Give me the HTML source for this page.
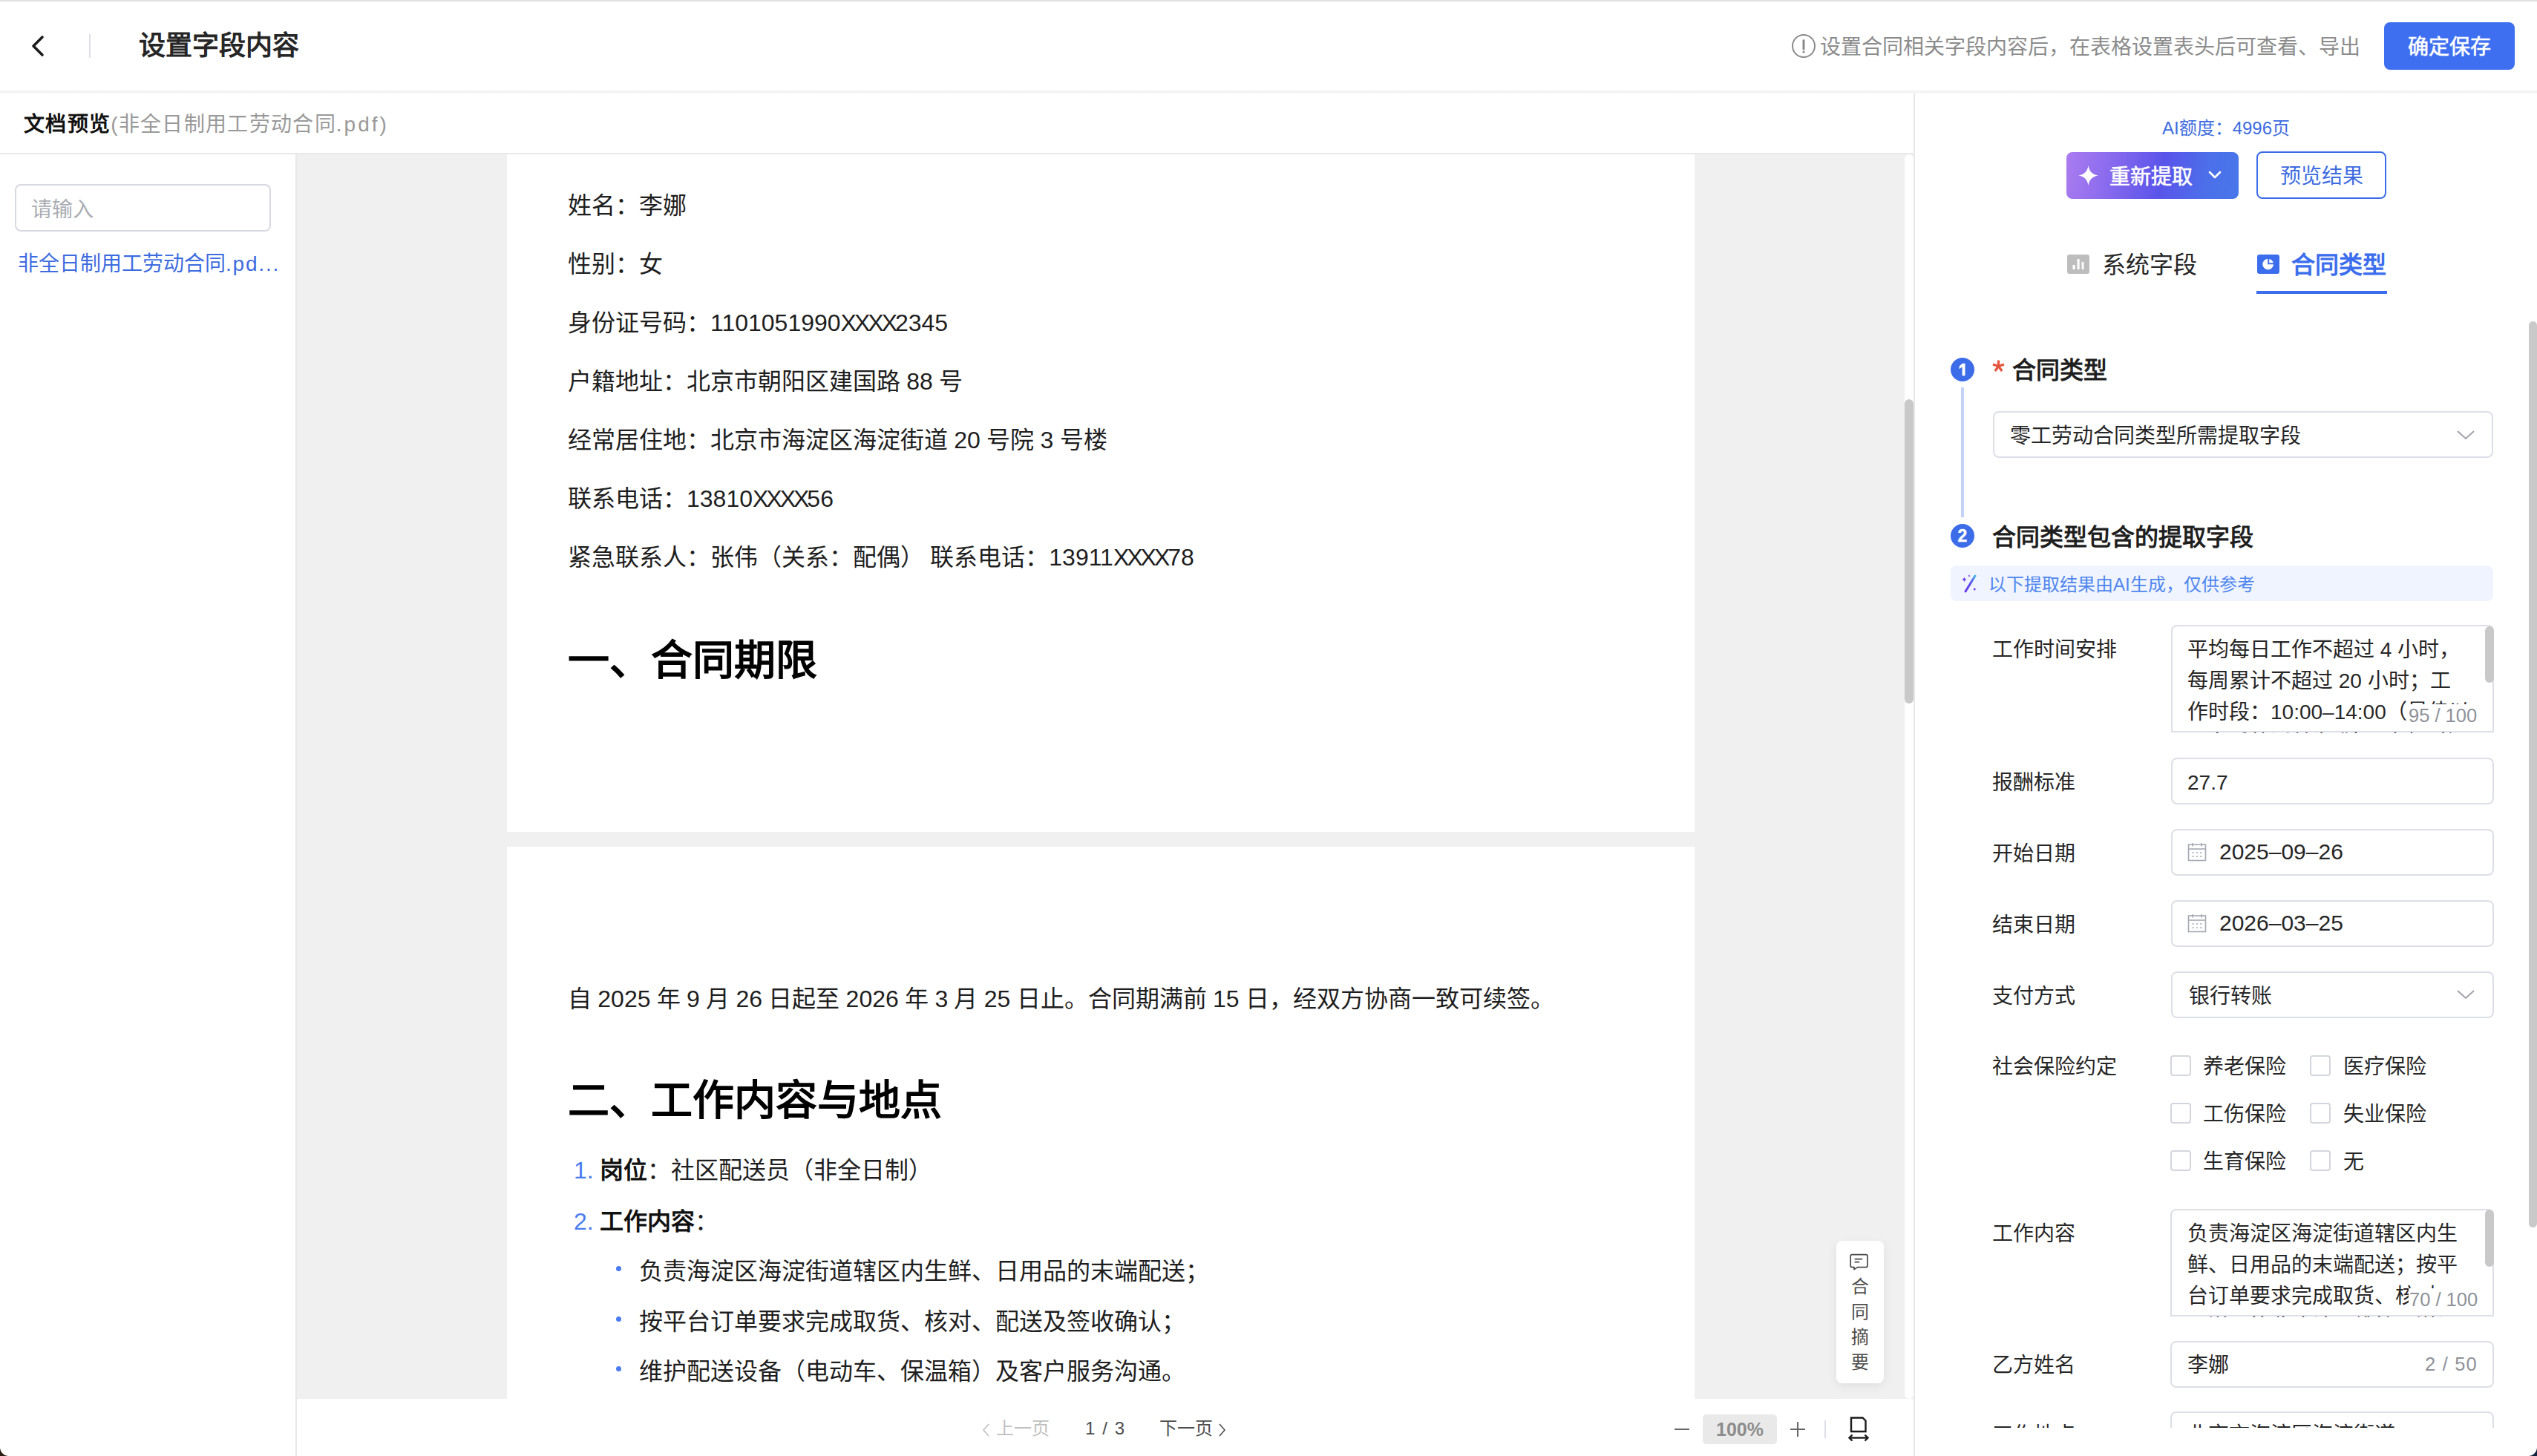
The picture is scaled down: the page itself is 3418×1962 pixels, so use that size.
<!DOCTYPE html>
<html lang="zh-CN">
<head>
<meta charset="utf-8">
<style>
*{box-sizing:border-box;margin:0;padding:0}
html,body{width:3418px;height:1962px;overflow:hidden;background:#fff}
body{position:relative;font-family:"Liberation Sans",sans-serif;color:#262626}
.a{position:absolute}
.t{position:absolute;white-space:nowrap;line-height:40px;margin-top:2px}
.dt{position:absolute;white-space:nowrap;font-size:32px;line-height:40px;color:#1e1e1e}
.dt b{color:#111}
.dt{word-spacing:-0.6px}
.x{letter-spacing:-3px}
.dh{position:absolute;white-space:nowrap;font-size:56px;line-height:70px;font-weight:700;color:#000}
</style>
</head>
<body>
<!-- top line -->
<div class="a" style="left:0;top:0;width:3418px;height:2px;background:#e1e1df"></div>
<!-- header -->
<svg class="a" style="left:38px;top:44px" width="26" height="36" viewBox="0 0 26 36"><polyline points="19,6 7,18 19,30" fill="none" stroke="#1c1c1c" stroke-width="3.6" stroke-linecap="round" stroke-linejoin="round"/></svg>
<div class="a" style="left:120px;top:46px;width:2px;height:32px;background:#dde0e8"></div>
<div class="t" style="left:187px;top:40px;font-size:36px;font-weight:700;color:#262626">设置字段内容</div>
<svg class="a" style="left:2413px;top:45px" width="34" height="34" viewBox="0 0 34 34"><circle cx="17" cy="17" r="15" fill="none" stroke="#8a8a8a" stroke-width="2"/><path d="M17 9.5 L17 21" stroke="#8a8a8a" stroke-width="3" stroke-linecap="round"/><circle cx="17" cy="25" r="1.6" fill="#8a8a8a"/></svg>
<div class="t" style="left:2452px;top:42px;font-size:28px;color:#8c8c8c">设置合同相关字段内容后，在表格设置表头后可查看、导出</div>
<div class="a" style="left:3212px;top:30px;width:176px;height:64px;background:#3e6ff0;border-radius:8px;color:#fff;font-size:28px;-webkit-text-stroke:0.6px #fff;line-height:68px;text-align:center">确定保存</div>
<!-- header shadow band -->
<div class="a" style="left:0;top:122px;width:3418px;height:4px;background:linear-gradient(#f1f1f1,#f8f8f8)"></div>

<!-- doc header -->
<div class="t" style="left:32px;top:146px;font-size:28px;color:#111;letter-spacing:1.3px"><b>文档预览</b><span style="color:#999">(非全日制用工劳动合同<span style="letter-spacing:3px">.pdf)</span></span></div>
<div class="a" style="left:0;top:206px;width:2578px;height:2px;background:#e8e8e8"></div>
<!-- sidebar -->
<div class="a" style="left:398px;top:208px;width:2px;height:1754px;background:#e8e8e8"></div>
<div class="a" style="left:20px;top:248px;width:345px;height:64px;border:2px solid #d6d9e0;border-radius:8px"></div>
<div class="t" style="left:42px;top:261px;font-size:28px;color:#aaadb3">请输入</div>
<div class="t" style="left:24px;top:334px;font-size:28px;color:#3d6ce0">非全日制用工劳动合同<span style="letter-spacing:1.8px">.pd...</span></div>

<!-- doc view -->
<div class="a" id="docview" style="left:400px;top:208px;width:2178px;height:1677px;background:#f0f0f0;overflow:hidden">
<div class="a" id="p1" style="left:283px;top:-600px;width:1600px;height:1513px;background:#fff">
</div>
<div class="a" id="p2" style="left:283px;top:933px;width:1600px;height:1600px;background:#fff">
</div>
</div>
<div class="a" style="left:683px;top:208px;width:1600px;height:1677px;overflow:hidden">
<div class="dt" style="left:82px;top:49px">姓名：李娜</div>
<div class="dt" style="left:82px;top:128px">性别：女</div>
<div class="dt" style="left:82px;top:207px">身份证号码：1101051990<span class="x">XXXX</span>2345</div>
<div class="dt" style="left:82px;top:286px">户籍地址：北京市朝阳区建国路 88 号</div>
<div class="dt" style="left:82px;top:365px">经常居住地：北京市海淀区海淀街道 20 号院 3 号楼</div>
<div class="dt" style="left:82px;top:444px">联系电话：13810<span class="x">XXXX</span>56</div>
<div class="dt" style="left:82px;top:523px">紧急联系人：张伟（关系：配偶） 联系电话：13911<span class="x">XXXX</span>78</div>
<div class="dh" style="left:82px;top:647px">一、合同期限</div>
<div class="dt" style="left:82px;top:1118px">自 2025 年 9 月 26 日起至 2026 年 3 月 25 日止。合同期满前 15 日，经双方协商一致可续签。</div>
<div class="dh" style="left:82px;top:1240px">二、工作内容与地点</div>
<div class="dt" style="left:90px;top:1349px"><span style="color:#4a7cf0">1.</span> <b>岗位</b>：社区配送员（非全日制）</div>
<div class="dt" style="left:90px;top:1418px"><span style="color:#4a7cf0">2.</span> <b>工作内容</b>：</div>
<div class="a" style="left:147px;top:1498px;width:7px;height:7px;border-radius:50%;background:#4a7cf0"></div>
<div class="dt" style="left:178px;top:1485px">负责海淀区海淀街道辖区内生鲜、日用品的末端配送；</div>
<div class="a" style="left:147px;top:1566px;width:7px;height:7px;border-radius:50%;background:#4a7cf0"></div>
<div class="dt" style="left:178px;top:1553px">按平台订单要求完成取货、核对、配送及签收确认；</div>
<div class="a" style="left:147px;top:1633px;width:7px;height:7px;border-radius:50%;background:#4a7cf0"></div>
<div class="dt" style="left:178px;top:1620px">维护配送设备（电动车、保温箱）及客户服务沟通。</div>
</div>
<!-- floating summary -->
<div class="a" style="left:2474px;top:1672px;width:64px;height:192px;background:#fff;border-radius:8px;box-shadow:0 4px 14px rgba(0,0,0,.07)"></div>
<svg class="a" style="left:2490px;top:1688px" width="28" height="26" viewBox="0 0 28 26"><path d="M5.2 2.6 H24 Q26 2.6 26 4.6 V17.6 Q26 19.6 24 19.6 H12.6 L8 22.6 V19.6 H5.2 Q3.2 19.6 3.2 17.6 V4.6 Q3.2 2.6 5.2 2.6 Z" fill="none" stroke="#4a4a4a" stroke-width="1.7" stroke-linejoin="round"/><line x1="9.3" y1="8.6" x2="18.5" y2="8.6" stroke="#4a4a4a" stroke-width="1.7" stroke-linecap="round"/><line x1="9.3" y1="12.7" x2="14.5" y2="12.7" stroke="#4a4a4a" stroke-width="1.7" stroke-linecap="round"/></svg>
<div class="a" style="left:2474px;top:1717px;width:64px;font-size:24px;line-height:34px;text-align:center;color:#4d4d4d">合<br>同<br>摘<br>要</div>

<!-- doc scrollbar track -->
<div class="a" style="left:2566px;top:208px;width:12px;height:1677px;background:#fff;border-radius:6px"></div>
<div class="a" style="left:2566px;top:538px;width:12px;height:410px;background:#c9c9c9;border-radius:6px"></div>

<!-- toolbar -->
<div class="a" id="toolbar" style="left:400px;top:1885px;width:2178px;height:77px;background:#fff">
<svg class="a" style="left:922px;top:32px" width="14" height="20" viewBox="0 0 14 20"><polyline points="10,2 3,10 10,18" fill="none" stroke="#bfbfbf" stroke-width="1.6"/></svg>
<div class="t" style="left:942px;top:18px;font-size:24px;color:#bfbfbf">上一页</div>
<div class="t" style="left:1062px;top:18px;font-size:24px;color:#4d4d4d;letter-spacing:1.6px">1 / 3</div>
<div class="t" style="left:1162px;top:18px;font-size:24px;color:#4d4d4d">下一页</div>
<svg class="a" style="left:1240px;top:32px" width="14" height="20" viewBox="0 0 14 20"><polyline points="3,2 10,10 3,18" fill="none" stroke="#4d4d4d" stroke-width="1.6"/></svg>
<div class="a" style="left:1856px;top:40px;width:20px;height:2px;background:#666"></div>
<div class="a" style="left:1894px;top:21px;width:100px;height:40px;border-radius:5px;background:#e9e9e9;color:#8c8c8c;font-size:25px;font-weight:700;line-height:40px;text-align:center">100%</div>
<div class="a" style="left:2012px;top:40px;width:20px;height:2px;background:#666"></div>
<div class="a" style="left:2021px;top:31px;width:2px;height:20px;background:#666"></div>
<div class="a" style="left:2058px;top:29px;width:2px;height:24px;background:#dcdfe8"></div>
<svg class="a" style="left:2088px;top:23px" width="32" height="36" viewBox="0 0 32 36"><path d="M6 2.5 H21.5 L25.5 6.5 V21 H6 Z" fill="none" stroke="#1a1a1a" stroke-width="2.4" stroke-linejoin="miter"/><line x1="4" y1="29.5" x2="28" y2="29.5" stroke="#1a1a1a" stroke-width="2.4"/><polyline points="7.5,25.5 3.5,29.5 7.5,33.5" fill="none" stroke="#1a1a1a" stroke-width="2.4"/><polyline points="24.5,25.5 28.5,29.5 24.5,33.5" fill="none" stroke="#1a1a1a" stroke-width="2.4"/></svg>
</div>

<!-- vertical divider -->
<div class="a" style="left:2578px;top:126px;width:2px;height:1836px;background:#e8e8e8"></div>

<!-- right panel -->
<div class="a" id="rp" style="left:2580px;top:0;width:838px;height:1924px;overflow:hidden">
<div class="t" style="left:0;top:151px;width:838px;text-align:center;font-size:24px;color:#3d6ce0">AI额度：4996页</div>
<div class="a" style="left:204px;top:205px;width:232px;height:63px;border-radius:8px;background:linear-gradient(100deg,#ab7cef 0%,#8a6bee 25%,#5a54ea 55%,#4c6fea 80%,#4878e9 100%)"></div>
<svg class="a" style="left:219px;top:222px" width="29" height="29" viewBox="0 0 29 29"><path d="M14.5 1 C15.6 9 20 13.4 28 14.5 C20 15.6 15.6 20 14.5 28 C13.4 20 9 15.6 1 14.5 C9 13.4 13.4 9 14.5 1 Z" fill="#fff"/></svg>
<div class="t" style="left:262px;top:217px;font-size:28px;color:#fff;-webkit-text-stroke:0.6px #fff">重新提取</div>
<svg class="a" style="left:394px;top:228px" width="20" height="16" viewBox="0 0 20 16"><polyline points="3,4 10,11 17,4" fill="none" stroke="#fff" stroke-width="2.6" stroke-linecap="round" stroke-linejoin="round"/></svg>
<div class="a" style="left:460px;top:204px;width:175px;height:64px;border:2px solid #3d6ce9;border-radius:8px;color:#3d6ce0;font-size:28px;line-height:64px;text-align:center">预览结果</div>

<!-- tabs -->
<svg class="a" style="left:205px;top:343px" width="30" height="26" viewBox="0 0 30 26"><rect x="0" y="0" width="30" height="26" rx="3" fill="#bdbdbd"/><rect x="7.5" y="14" width="3.2" height="6" fill="#fff"/><rect x="13.6" y="6" width="3" height="14" fill="#fff"/><rect x="19.6" y="10" width="2.8" height="10" fill="#fff"/></svg>
<div class="t" style="left:252px;top:335px;font-size:32px;color:#262626">系统字段</div>
<svg class="a" style="left:461px;top:343px" width="30" height="26" viewBox="0 0 30 26"><rect x="0" y="0" width="30" height="26" rx="3" fill="#3b6ded"/><path d="M14.2 5.8 A7.3 7.3 0 1 0 21.9 13.2 L14.2 13.2 Z" fill="#fff"/><path d="M16.2 5.9 A7.3 7.3 0 0 1 21.8 11.2 L16.2 11.2 Z" fill="#fff"/></svg>
<div class="t" style="left:507px;top:335px;font-size:32px;font-weight:700;color:#3b6ded">合同类型</div>
<div class="a" style="left:460px;top:392px;width:176px;height:4px;background:#3b6ded"></div>

<!-- step 1 -->
<svg class="a" style="left:48px;top:482px" width="32" height="32" viewBox="0 0 32 32"><circle cx="16" cy="16" r="16" fill="#3d6ce9"/><path d="M11.6 11.6 L15.9 7.8 H19.5 V24.2 H15.6 V12.6 L11.6 15.2 Z" fill="#fff"/></svg>
<div class="a" style="left:62px;top:522px;width:4px;height:175px;background:#c3d2f7"></div>
<svg class="a" style="left:103px;top:484px" width="19" height="19" viewBox="0 0 19 19"><g stroke="#e5533d" stroke-width="3.2" stroke-linecap="butt"><line x1="9.5" y1="1.5" x2="9.5" y2="9.5"/><line x1="9.5" y1="9.5" x2="2" y2="7"/><line x1="9.5" y1="9.5" x2="17" y2="7"/><line x1="9.5" y1="9.5" x2="4.8" y2="16"/><line x1="9.5" y1="9.5" x2="14.2" y2="16"/></g></svg>
<div class="t" style="left:131px;top:477px;font-size:32px;font-weight:700;color:#1f1f1f">合同类型</div>
<div class="a" style="left:105px;top:554px;width:674px;height:63px;border:2px solid #dcdfe6;border-radius:8px"></div>
<div class="t" style="left:128px;top:566px;font-size:28px;color:#262626">零工劳动合同类型所需提取字段</div>
<svg class="a" style="left:729px;top:578px" width="26" height="16" viewBox="0 0 26 16"><polyline points="2,3 13,13 24,3" fill="none" stroke="#a0a3aa" stroke-width="2"/></svg>

<!-- step 2 -->
<div class="a" style="left:48px;top:706px;width:32px;height:32px;border-radius:50%;background:#3d6ce9;color:#fff;font-size:23px;font-weight:700;line-height:33px;text-align:center;-webkit-text-stroke:0.4px #fff">2</div>
<div class="t" style="left:104px;top:702px;font-size:32px;font-weight:700;color:#1f1f1f">合同类型包含的提取字段</div>
<div class="a" style="left:48px;top:762px;width:731px;height:48px;border-radius:8px;background:#f0f4fe"></div>
<svg class="a" style="left:60px;top:772px" width="28" height="28" viewBox="0 0 28 28"><defs><linearGradient id="wg" x1="0" y1="1" x2="1" y2="0"><stop offset="0" stop-color="#6a35f0"/><stop offset="0.6" stop-color="#5a55ea"/><stop offset="1" stop-color="#4ab8e8"/></linearGradient></defs><path d="M8 25 L21 4" stroke="url(#wg)" stroke-width="3" stroke-linecap="round"/><path d="M6.4 5.6 Q6.9 8.6 9.8 9 Q6.9 9.4 6.4 12.4 Q5.9 9.4 3 9 Q5.9 8.6 6.4 5.6Z" fill="#6a3af0"/><path d="M13 2.3 Q13.3 3.7 14.7 4 Q13.3 4.3 13 5.7 Q12.7 4.3 11.3 4 Q12.7 3.7 13 2.3Z" fill="#6a3af0"/><path d="M20.4 19.7 Q20.7 21.7 22.7 22 Q20.7 22.3 20.4 24.3 Q20.1 22.3 18.1 22 Q20.1 21.7 20.4 19.7Z" fill="#6a3af0"/></svg>
<div class="t" style="left:99px;top:766px;font-size:24px;color:#4f86ee">以下提取结果由AI生成，仅供参考</div>

<!-- form -->
<div class="t" style="left:104px;top:854px;font-size:28px;color:#262626">工作时间安排</div>
<div class="a" style="left:345px;top:842px;width:435px;height:146px;overflow:hidden">
  <div class="a" style="left:0;top:0;width:435px;height:145px;border:2px solid #dcdfe6;border-bottom:none;border-radius:8px 8px 0 0"></div>
  <div class="a" style="left:0;top:143px;width:435px;height:2px;background:#dcdfe6"></div>
  <div class="a" style="left:22px;top:13px;width:395px;font-size:28px;line-height:42px;color:#262626;white-space:nowrap">平均每日工作不超过 4 小时，<br>每周累计不超过 20 小时；工<br>作时段：10:00–14:00（最佳以<br>平台系统派单为准），中午时间</div>
  <div class="a" style="left:423px;top:2px;width:12px;height:76px;border-radius:6px;background:#c9c9c9"></div>
  <div class="a" style="left:319px;top:107px;width:110px;height:36px;padding-left:1px;font-size:25.5px;line-height:30px;color:#8e9199;background:#fff;white-space:nowrap">95 / 100</div>
</div>

<div class="t" style="left:104px;top:1033px;font-size:28px;color:#262626">报酬标准</div>
<div class="a" style="left:345px;top:1021px;width:435px;height:63px;border:2px solid #dcdfe6;border-radius:8px"></div>
<div class="t" style="left:367px;top:1033px;font-size:28px;color:#262626">27.7</div>

<div class="t" style="left:104px;top:1129px;font-size:28px;color:#262626">开始日期</div>
<div class="a" style="left:345px;top:1117px;width:435px;height:63px;border:2px solid #dcdfe6;border-radius:8px"></div>
<svg class="a" style="left:367px;top:1135px" width="26" height="26" viewBox="0 0 26 26"><rect x="1.5" y="3" width="23" height="21.5" fill="none" stroke="#a3a8b2" stroke-width="1.6"/><line x1="1.5" y1="9" x2="24.5" y2="9" stroke="#a3a8b2" stroke-width="1.6"/><line x1="7" y1="1" x2="7" y2="5.5" stroke="#a3a8b2" stroke-width="1.6"/><line x1="19" y1="1" x2="19" y2="5.5" stroke="#a3a8b2" stroke-width="1.6"/><g fill="#a3a8b2"><rect x="6.5" y="13.3" width="2.4" height="1.4"/><rect x="11.8" y="13.3" width="2.4" height="1.4"/><rect x="17" y="13.3" width="2.4" height="1.4"/><rect x="6.5" y="18.4" width="2.4" height="1.4"/><rect x="11.8" y="18.4" width="2.4" height="1.4"/><rect x="17" y="18.4" width="2.4" height="1.4"/></g></svg>
<div class="t" style="left:410px;top:1126px;font-size:30px;color:#262626">2025–09–26</div>

<div class="t" style="left:104px;top:1225px;font-size:28px;color:#262626">结束日期</div>
<div class="a" style="left:345px;top:1213px;width:435px;height:63px;border:2px solid #dcdfe6;border-radius:8px"></div>
<svg class="a" style="left:367px;top:1231px" width="26" height="26" viewBox="0 0 26 26"><rect x="1.5" y="3" width="23" height="21.5" fill="none" stroke="#a3a8b2" stroke-width="1.6"/><line x1="1.5" y1="9" x2="24.5" y2="9" stroke="#a3a8b2" stroke-width="1.6"/><line x1="7" y1="1" x2="7" y2="5.5" stroke="#a3a8b2" stroke-width="1.6"/><line x1="19" y1="1" x2="19" y2="5.5" stroke="#a3a8b2" stroke-width="1.6"/><g fill="#a3a8b2"><rect x="6.5" y="13.3" width="2.4" height="1.4"/><rect x="11.8" y="13.3" width="2.4" height="1.4"/><rect x="17" y="13.3" width="2.4" height="1.4"/><rect x="6.5" y="18.4" width="2.4" height="1.4"/><rect x="11.8" y="18.4" width="2.4" height="1.4"/><rect x="17" y="18.4" width="2.4" height="1.4"/></g></svg>
<div class="t" style="left:410px;top:1222px;font-size:30px;color:#262626">2026–03–25</div>

<div class="t" style="left:104px;top:1321px;font-size:28px;color:#262626">支付方式</div>
<div class="a" style="left:345px;top:1309px;width:435px;height:63px;border:2px solid #dcdfe6;border-radius:8px"></div>
<div class="t" style="left:369px;top:1321px;font-size:28px;color:#262626">银行转账</div>
<svg class="a" style="left:729px;top:1332px" width="26" height="16" viewBox="0 0 26 16"><polyline points="2,3 13,13 24,3" fill="none" stroke="#a0a3aa" stroke-width="2"/></svg>

<div class="t" style="left:104px;top:1416px;font-size:28px;color:#262626">社会保险约定</div>
<div class="a" style="left:344px;top:1422px;width:28px;height:28px;border:2px solid #d3d6dd;border-radius:4px"></div>
<div class="t" style="left:388px;top:1416px;font-size:28px;color:#262626">养老保险</div>
<div class="a" style="left:532px;top:1422px;width:28px;height:28px;border:2px solid #d3d6dd;border-radius:4px"></div>
<div class="t" style="left:577px;top:1416px;font-size:28px;color:#262626">医疗保险</div>
<div class="a" style="left:344px;top:1486px;width:28px;height:28px;border:2px solid #d3d6dd;border-radius:4px"></div>
<div class="t" style="left:388px;top:1480px;font-size:28px;color:#262626">工伤保险</div>
<div class="a" style="left:532px;top:1486px;width:28px;height:28px;border:2px solid #d3d6dd;border-radius:4px"></div>
<div class="t" style="left:577px;top:1480px;font-size:28px;color:#262626">失业保险</div>
<div class="a" style="left:344px;top:1550px;width:28px;height:28px;border:2px solid #d3d6dd;border-radius:4px"></div>
<div class="t" style="left:388px;top:1544px;font-size:28px;color:#262626">生育保险</div>
<div class="a" style="left:532px;top:1550px;width:28px;height:28px;border:2px solid #d3d6dd;border-radius:4px"></div>
<div class="t" style="left:577px;top:1544px;font-size:28px;color:#262626">无</div>

<div class="t" style="left:104px;top:1641px;font-size:28px;color:#262626">工作内容</div>
<div class="a" style="left:344px;top:1629px;width:436px;height:146px;overflow:hidden">
  <div class="a" style="left:0;top:0;width:436px;height:145px;border:2px solid #dcdfe6;border-bottom:none;border-radius:8px 8px 0 0"></div>
  <div class="a" style="left:0;top:143px;width:436px;height:2px;background:#dcdfe6"></div>
  <div class="a" style="left:23px;top:13px;width:395px;font-size:28px;line-height:42px;color:#262626;white-space:nowrap">负责海淀区海淀街道辖区内生<br>鲜、日用品的末端配送；按平<br>台订单要求完成取货、核对、<br>配送及签收确认；维护配送设</div>
  <div class="a" style="left:424px;top:1px;width:12px;height:77px;border-radius:6px;background:#c9c9c9"></div>
  <div class="a" style="left:321px;top:107px;width:110px;height:36px;padding-left:1px;font-size:25.5px;line-height:30px;color:#8e9199;background:#fff;white-space:nowrap">70 / 100</div>
</div>

<div class="t" style="left:104px;top:1818px;font-size:28px;color:#262626">乙方姓名</div>
<div class="a" style="left:344px;top:1807px;width:436px;height:63px;border:2px solid #dcdfe6;border-radius:8px"></div>
<div class="t" style="left:367px;top:1818px;font-size:28px;color:#262626">李娜</div>
<div class="a" style="left:687px;top:1823px;font-size:25.5px;line-height:30px;color:#8e9199;white-space:nowrap;letter-spacing:1.2px">2 / 50</div>

<div class="t" style="left:104px;top:1912px;font-size:28px;color:#262626">工作地点</div>
<div class="a" style="left:344px;top:1902px;width:436px;height:63px;border:2px solid #dcdfe6;border-radius:8px"></div>
<div class="t" style="left:367px;top:1912px;font-size:28px;color:#262626">北京市海淀区海淀街道</div>
<!-- right panel scrollbar -->
<div class="a" style="left:827px;top:433px;width:11px;height:1221px;border-radius:6px;background:#c9c9c9"></div>
</div>



<!-- window corners -->
<div class="a" style="left:0;top:1950px;width:12px;height:12px;background:radial-gradient(circle at 100% 0,rgba(42,31,18,0) 11.5px,#2a1f12 12.5px)"></div>
<div class="a" style="left:3406px;top:1950px;width:12px;height:12px;background:radial-gradient(circle at 0 0,rgba(20,35,59,0) 11.5px,#14233b 12.5px)"></div>
</body>
</html>
